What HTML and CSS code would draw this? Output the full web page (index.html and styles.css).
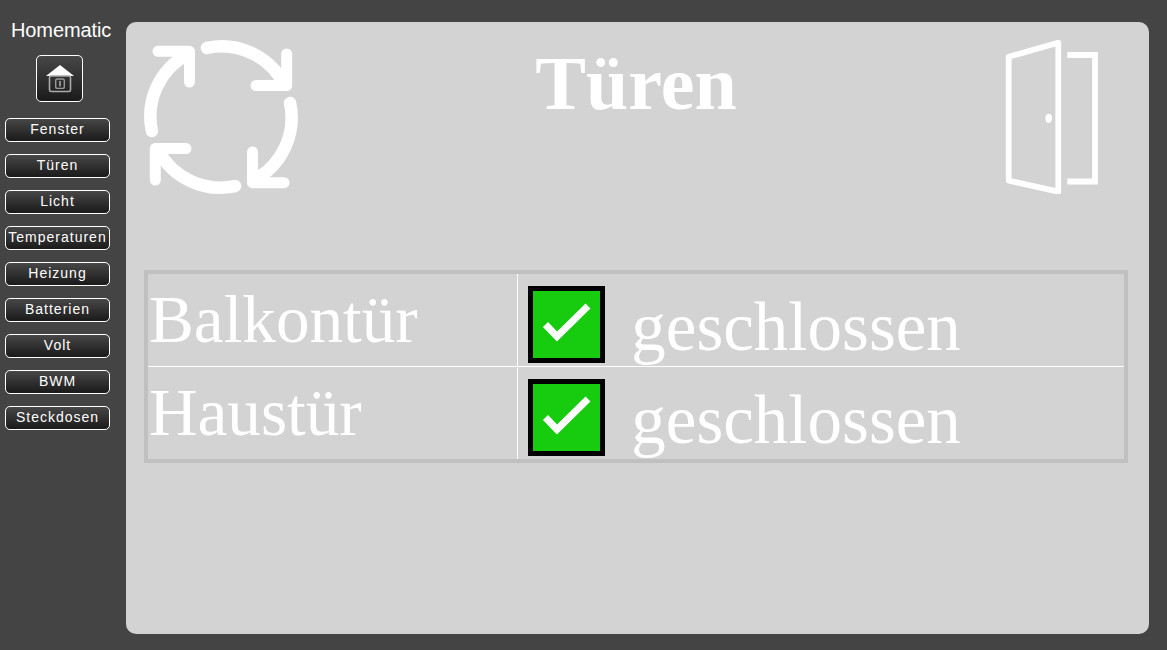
FILE: index.html
```html
<!DOCTYPE html>
<html lang="de">
  <head>
    <meta charset="UTF-8" />
    <title>Homematic</title>
    <link rel="stylesheet" href="styles.css">
  </head>
  <body>
    <!-- Navigation -->
    <div class="sidebar">
      <div class="brand">Homematic</div>
      <button class="home-btn">
        <svg width="30" height="30" viewBox="0 0 30 30">
          <path d="M15 1 L29 12 H1 Z" fill="#fff" />
          <rect x="4.5" y="12" width="21" height="15.5" rx="1.5" fill="none" stroke="#aaa" stroke-width="1.6" />
          <rect x="10.7" y="15" width="8.6" height="9.4" rx="1.5" fill="none" stroke="#999" stroke-width="1.4" />
          <rect x="14.2" y="17" width="1.6" height="5.4" fill="#aaa" />
        </svg>
      </button>
      <button class="nav-btn">Fenster</button>
      <button class="nav-btn">Türen</button>
      <button class="nav-btn">Licht</button>
      <button class="nav-btn">Temperaturen</button>
      <button class="nav-btn">Heizung</button>
      <button class="nav-btn">Batterien</button>
      <button class="nav-btn">Volt</button>
      <button class="nav-btn">BWM</button>
      <button class="nav-btn">Steckdosen</button>
    </div>

    <!-- Inhalt -->
    <div class="panel">
      <div class="header">
        <svg class="reload-icon" width="154" height="154" viewBox="3 3 154 154">
          <g id="arrow" fill="none" stroke="#fff" stroke-linecap="round" stroke-linejoin="round">
            <path d="M66 10.9 A70.5 70.5 0 0 1 143 47" stroke-width="12.5" />
            <path d="M145.7 17 V48.5 H115" stroke-width="11" />
          </g>
          <use href="#arrow" transform="rotate(90 80 80)" />
          <use href="#arrow" transform="rotate(180 80 80)" />
          <use href="#arrow" transform="rotate(270 80 80)" />
        </svg>
        <h1 class="title">Türen</h1>
        <svg class="door-icon" width="94" height="154" viewBox="0 0 94 154">
          <path d="M3.7 16.7 L53.3 2.7 V151.7 L3.7 140.7 Z" fill="none" stroke="#fff" stroke-width="5.8" stroke-linejoin="round" />
          <path d="M62.3 15 H90 V141.5 H62.3" fill="none" stroke="#fff" stroke-width="5.8" />
          <ellipse cx="43.7" cy="78.3" rx="3.3" ry="4.6" fill="#fff" />
        </svg>
      </div>

      <table class="status">
        <tr>
          <td class="name">Balkontür</td>
          <td class="state">
            <svg class="check" width="77" height="77" viewBox="0 0 77 77">
              <rect x="2.5" y="2.5" width="72" height="72" fill="#17cb0f" stroke="#000" stroke-width="5" />
              <path d="M17.5 38.5 L29 50.5 L60 20" fill="none" stroke="#fff" stroke-width="7" />
            </svg>
            <span>geschlossen</span>
          </td>
        </tr>
        <tr>
          <td class="name">Haustür</td>
          <td class="state">
            <svg class="check" width="77" height="77" viewBox="0 0 77 77">
              <rect x="2.5" y="2.5" width="72" height="72" fill="#17cb0f" stroke="#000" stroke-width="5" />
              <path d="M17.5 38.5 L29 50.5 L60 20" fill="none" stroke="#fff" stroke-width="7" />
            </svg>
            <span>geschlossen</span>
          </td>
        </tr>
      </table>
    </div>
  </body>
</html>
```

FILE: styles.css
```css
html,
body {
  height: 100%;
}

body {
  margin: 0;
  display: flex;
  background-color: #444444;
  font-family: "Liberation Sans", Arial, sans-serif;
  overflow: hidden;
}

.sidebar {
  width: 126px;
  flex-shrink: 0;
  display: flex;
  flex-direction: column;
  align-items: flex-start;
  padding-top: 18px;
  padding-left: 5px;
  box-sizing: border-box;
}

.brand {
  margin-left: 6px;
  font-size: 20px;
  line-height: 24px;
  letter-spacing: -0.1px;
  color: white;
}

button {
  font-family: "Liberation Sans", Arial, sans-serif;
  color: white;
  border: 1px solid white;
  background: linear-gradient(#474747, #1a1a1a);
  padding: 0;
}

.home-btn {
  width: 47px;
  height: 47px;
  margin: 13px 0 16px 31px;
  border-radius: 5px;
  display: flex;
  justify-content: center;
  align-items: center;
}

.nav-btn {
  width: 105px;
  height: 24px;
  margin-bottom: 12px;
  padding-bottom: 2px;
  border-radius: 5px;
  font-size: 14px;
  letter-spacing: 1px;
  white-space: nowrap;
}

.panel {
  width: 1023px;
  height: 612px;
  margin-top: 22px;
  padding: 18px 21px 0 18px;
  box-sizing: border-box;
  background-color: #d3d3d3;
  border-radius: 10px;
}

.header {
  height: 230px;
  display: grid;
  grid-template-columns: 1fr auto 1fr;
  align-items: start;
}

.title {
  margin: 0;
  font-family: "Liberation Serif", "Times New Roman", serif;
  font-size: 76px;
  line-height: 86px;
  font-weight: bold;
  color: white;
}

.door-icon {
  justify-self: end;
  margin-right: 29px;
}

.status {
  width: 984px;
  border: 4px solid #c0c0c0;
  border-collapse: separate;
  border-spacing: 0;
  font-family: "Liberation Serif", "Times New Roman", serif;
  color: white;
}

.status td {
  height: 92px;
  padding: 0;
  box-sizing: border-box;
  vertical-align: top;
}

.status tr + tr td {
  height: 93px;
  border-top: 1px solid white;
}

.name {
  width: 370px;
  padding-left: 1px !important;
  border-right: 1px solid white;
  font-size: 67.2px;
  line-height: 91px;
}

.state {
  padding: 12px 0 0 10px !important;
  font-size: 69px;
  line-height: 70px;
}

.check {
  vertical-align: -13px;
  margin-right: 9px;
}
```
